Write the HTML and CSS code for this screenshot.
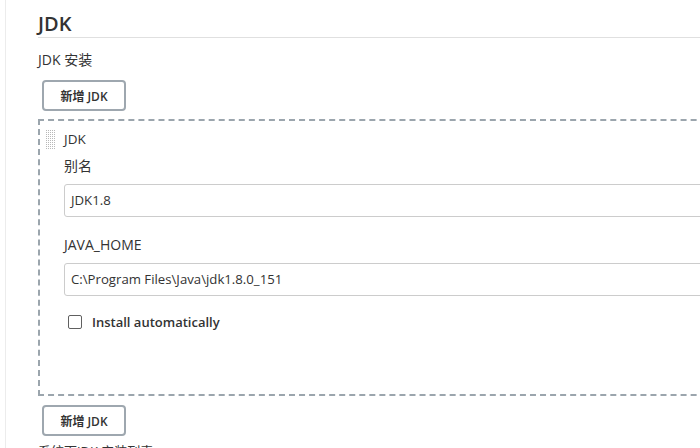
FILE: index.html
```html
<!DOCTYPE html>
<html>
<head>
<meta charset="utf-8">
<link rel="stylesheet" href="styles.css">
</head>
<body>
<div class="page">
  <div class="content">
    <h2 class="section-title">JDK</h2>
    <div class="subtitle">JDK 安装</div>
    <button class="btn">新增 JDK</button>
    <div class="repeat">
      <div class="repeat-head">
        <svg class="handle" width="10" height="20" viewBox="0 0 10 20">
          <defs>
            <pattern id="dots" width="2" height="2" patternUnits="userSpaceOnUse">
              <rect x="0" y="0" width="1" height="1" fill="#b8b8b8"/>
            </pattern>
          </defs>
          <rect width="10" height="20" fill="url(#dots)"/>
        </svg>
        <span class="repeat-title">JDK</span>
      </div>
      <div class="field">
        <div class="label">别名</div>
        <div class="input">JDK1.8</div>
      </div>
      <div class="field">
        <div class="label">JAVA_HOME</div>
        <div class="input">C:\Program Files\Java\jdk1.8.0_151</div>
      </div>
      <label class="check">
        <span class="box"></span>
        <span class="check-text">Install automatically</span>
      </label>
    </div>
    <button class="btn">新增 JDK</button>
    <div class="footnote">系统下JDK 安装列表</div>
  </div>
</div>
</body>
</html>
```
FILE: styles.css
```css
html, body {
  margin: 0;
  padding: 0;
  background: #fff;
  overflow: hidden;
}
body {
  width: 700px;
  height: 448px;
  font-family: "Open Sans", "Noto Sans CJK SC", sans-serif;
  color: #333;
}
.page {
  padding-left: 5px;
  height: 448px;
}
.content {
  border-left: 1px solid #ececec;
  padding-left: 32px;
  width: 1000px;
  height: 448px;
}
.section-title {
  margin: 0;
  padding-top: 11px;
  height: 26px;
  font-size: 20px;
  font-weight: 600;
  line-height: 26px;
  color: #333;
  border-bottom: 1px solid #e0e0e0;
}
.subtitle {
  margin-top: 13px;
  font-size: 14px;
  line-height: 18px;
  height: 18px;
}
.btn {
  display: block;
  margin: 11px 0 0 4px;
  width: 84px;
  height: 31px;
  border: 2px solid #9ea7af;
  border-radius: 4px;
  background: #fff;
  font-family: "Open Sans", "Noto Sans CJK SC", sans-serif;
  font-size: 12px;
  font-weight: 600;
  color: #333;
  padding: 0;
}
.repeat {
  margin-top: 8px;
  border: 2px dashed #9ba5ad;
  height: 277px;
  box-sizing: border-box;
  padding: 9px 0 0 6px;
}
.repeat + .btn {
  margin-top: 9px;
}
.repeat-head {
  display: flex;
  align-items: flex-start;
  gap: 8px;
  height: 20px;
}
.handle {
  display: block;
}
.repeat-title {
  font-size: 13.5px;
  line-height: 18px;
}
.field {
  padding-left: 18px;
  margin-top: 7px;
}
.label {
  font-size: 14px;
  line-height: 18px;
  height: 18px;
}
.field + .field {
  margin-top: 19px;
}
.input {
  margin-top: 9px;
  height: 33px;
  box-sizing: border-box;
  border: 1px solid #cccccc;
  border-radius: 3px;
  padding: 0 6px;
  font-size: 13.2px;
  line-height: 31px;
  width: 900px;
}
.check {
  display: flex;
  align-items: center;
  margin: 18px 0 0 22px;
  height: 16px;
}
.box {
  width: 12px;
  height: 12px;
  border: 1px solid #606060;
  border-radius: 2px;
  margin-right: 10px;
}
.check-text {
  font-size: 13px;
  font-weight: 600;
  color: #333;
}
.footnote {
  margin-top: 6px;
  font-size: 13px;
  line-height: 18px;
}
```
